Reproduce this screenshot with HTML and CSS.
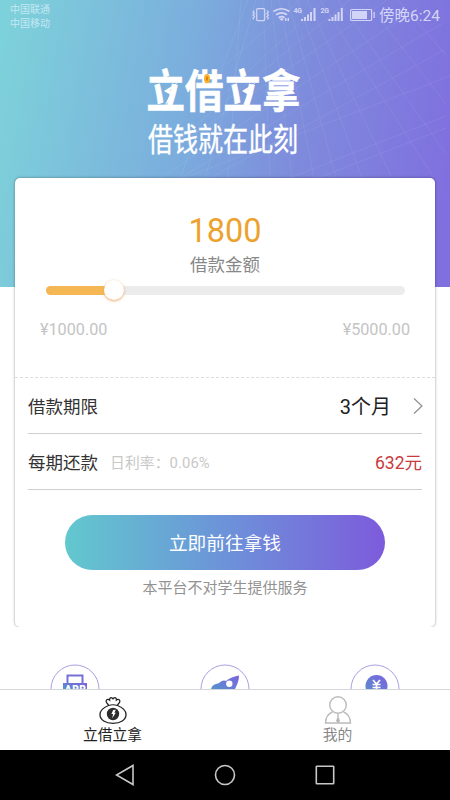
FILE: index.html
```html
<!DOCTYPE html>
<html lang="zh-CN">
<head>
<meta charset="utf-8">
<title>立借立拿</title>
<link rel="stylesheet" href="styles.css">
</head>
<body>
<div class="phone">
  <svg class="mesh" width="450" height="287" viewBox="0 0 450 287" aria-hidden="true">
    <g fill="none" stroke="#fff" stroke-opacity=".07">
      <path d="M248 0 180 178M256 0 205 178M241 0 228 178M263 0 270 178M271 0 292 178M279 0 314 178M288 0 336 178M297 0 362 178M307 0 392 178M320 0 434 178M338 0 446 154M365 0 446 104M398 0 446 55"/>
      <path d="M450 76 184 178M446 116 290 178M446 128 318 178M443 23 180 178M418 8 160 178M387 0 172 150M350 0 190 130M325 0 214 103M444 50 210 178M300 0 225 65"/>
    </g>
  </svg>
  <header class="status">
    <div class="carriers"><span>中国联通</span><span>中国移动</span></div>
    <div class="indicators">
      <svg width="124" height="18" viewBox="0 0 124 18" aria-hidden="true">
        <g fill="none" stroke="#d3d5f6" stroke-width="1.2">
          <rect x="5.700" y="2.600" width="8" height="12" rx="1"/>
          <path d="M3.200 4.500 2 6l1.500 1.500L2 9l1.500 1.500L2 12l1 1.500M16.200 4.500 17.400 6l-1.500 1.500L17.400 9l-1.500 1.500 1.500 1.500-1 1.500"/>
          <path d="M22.500 5.500q8-5.500 16 0M25 8.800q5.500-4 11 0M27.600 11.700q3-2 6 0" stroke-width="1.700"/>
          <rect x="99.600" y="3.500" width="21" height="11" rx="1"/>
        </g>
        <g fill="#d3d5f6">
          <path d="m28.500 13 2.200-1 2.200 1-2.200 2zM34 12h1.500v3H34zM36.500 12h1.500v3h-1.500zM50 13h2v2h-2zM53 11h2v4h-2zM56 8.500h2V15h-2zM59 6h2v9h-2zM62.500 2h2v13h-2zM77.500 13h2v2h-2zM80.500 11h2v4h-2zM83.500 8.500h2V15h-2zM86.500 6h2v9h-2zM89.800 2h2v13h-2zM101 5h15v8h-15zM122.500 6h1.300v6h-1.300z"/>
          <text x="42.500" y="7.400">4G</text><text x="69.500" y="7.400">2G</text>
        </g>
      </svg>
      <span class="clock">傍晚6:24</span>
    </div>
  </header>

  <section class="hero">
    <h1 class="brand"><span class="mark">立<svg class="bolt" width="39" height="44" viewBox="0 0 39 44" aria-hidden="true"><path d="M32 17 18 24.500l6 3L18.500 37.400 29 27l-5-3z"/></svg></span><span class="mark">借<i class="coin"></i></span><span class="mark">立<svg class="bolt" width="39" height="44" viewBox="0 0 39 44" aria-hidden="true"><path d="M32 17 18 24.500l6 3L18.500 37.400 29 27l-5-3z"/></svg></span><span class="mark">拿</span></h1>
    <p class="slogan">借钱就在此刻</p>
  </section>

  <main class="card">
    <section class="amount">
      <div class="amount-value">1800</div>
      <div class="amount-label">借款金额</div>
      <div class="slider"><div class="slider-fill"></div><div class="knob"></div></div>
      <div class="range"><span>¥1000.00</span><span>¥5000.00</span></div>
    </section>
    <section class="rows">
      <div class="row">
        <span>借款期限</span>
        <span class="term">3个月</span>
        <svg class="chevron" width="10" height="18" viewBox="0 0 10 18" aria-hidden="true"><path d="m1 1.500 8 7.500-8 7.500" fill="none" stroke="#8e8e8e" stroke-width="1.200"/></svg>
      </div>
      <div class="row">
        <span>每期还款</span>
        <span class="rate">日利率：0.06%</span>
        <span class="payment">632元</span>
      </div>
    </section>
    <button class="submit">立即前往拿钱</button>
    <p class="notice">本平台不对学生提供服务</p>
  </main>

  <section class="features">
    <svg width="50" height="25" viewBox="0 0 50 25" aria-hidden="true">
      <defs><linearGradient id="tone" x1="0" y1="1" x2="1" y2="0"><stop offset="0" stop-color="#5493cb"/><stop offset="1" stop-color="#7d62df"/></linearGradient></defs>
      <circle class="ring" cx="25" cy="25" r="24"/>
      <path d="M17.500 20v-8.500h15V20" fill="none" stroke="#7470d8" stroke-width="2"/>
      <path d="M13 19h24v6H13z" fill="url(#tone)"/>
      <text class="app" x="25.500" y="28.500" text-anchor="middle">APP</text>
    </svg>
    <svg width="50" height="25" viewBox="0 0 50 25" aria-hidden="true">
      <circle class="ring" cx="25" cy="25" r="24"/>
      <path d="M11 25q1-4 5-5 3-.5 5-2.500 3-1.500 5-.500 4-4 13-5.500 0 6-4 13.500z" fill="url(#tone)"/>
      <circle cx="29.300" cy="19.800" r="3.200" fill="#fff"/>
    </svg>
    <svg width="50" height="25" viewBox="0 0 50 25" aria-hidden="true">
      <circle class="ring" cx="25" cy="25" r="24"/>
      <circle cx="26.500" cy="22" r="11" fill="url(#tone)"/>
      <path d="m23 16 3.500 4 3.500-4M22.500 20.500h8M22.500 23.500h8M26.500 20v5" fill="none" stroke="#fff" stroke-width="1.700"/>
    </svg>
  </section>

  <nav class="tabs">
    <a class="tab active">
      <svg width="28" height="28" viewBox="0 0 28 28" aria-hidden="true">
        <path d="M9.500 9.500C9 7 6.500 7 7.200 4.800 7.800 3.200 9.800 3 10.600 4c0-2 1-2.800 2.200-2.200L14 2.800l1.200-1c1.200-.6 2.200.2 2.200 2.200.8-1 2.800-.8 3.400.8.700 2.200-1.800 2.200-2.300 4.700 5 2 8.500 5 8.500 9 0 5.500-5.500 8.800-13 8.800S1 24 1 18.500c0-4 3.500-7 8.500-9Z" fill="none" stroke="#222" stroke-width="1.300"/>
        <path d="M9.500 9.500q4.500-1.500 9 0" fill="none" stroke="#222" stroke-width="1.100"/>
        <circle cx="14" cy="18" r="6.200" fill="#2c2c2c"/>
        <path d="m14.200 14 2.600-.2-1.400 2.900h1.400l-3.600 5.500.9-4.200h-1.700z" fill="#fff"/>
      </svg>
      <span>立借立拿</span>
    </a>
    <a class="tab">
      <svg width="28" height="28" viewBox="0 0 28 28" aria-hidden="true">
        <g fill="none" stroke="#bbb" stroke-width="1.400"><circle cx="14" cy="9" r="8.300"/><path d="M8.500 16Q1.800 18.500 1.500 27h25q-.3-8.500-7-11M14 18v3"/></g>
        <path d="m14 20 2 5-2 2-2-2z" fill="#b5b5b5"/>
      </svg>
      <span>我的</span>
    </a>
  </nav>

  <footer class="system">
    <svg width="20" height="22" viewBox="0 0 20 22" aria-hidden="true"><path d="M18 1.500v19L1.500 11Z"/></svg>
    <svg width="22" height="22" viewBox="0 0 22 22" aria-hidden="true"><circle cx="11" cy="11" r="9.500"/></svg>
    <svg width="20" height="22" viewBox="0 0 20 22" aria-hidden="true"><rect x="1.300" y="2.300" width="17.400" height="17.400" rx=".5"/></svg>
  </footer>
</div>
</body>
</html>
```
FILE: styles.css
```css
* { box-sizing: border-box; }
body {
  margin: 0;
  font-family: Roboto, "Noto Sans CJK SC", sans-serif;
  font-weight: 400;
  color: #333;
}
h1, p { margin: 0; }
svg { display: block; flex: none; }

.phone {
  position: relative;
  display: flex;
  flex-direction: column;
  width: 450px;
  height: 800px;
  overflow: hidden;
  background: linear-gradient(99deg, #7dd1da 2%, #7baedd 40%, #7e8cdc 64%, #806fdf 97%) 0 0 / 100% 287px no-repeat #fff;
}
.mesh { position: absolute; top: 0; left: 0; }

.status {
  position: relative;
  display: flex;
  justify-content: space-between;
  height: 32px;
  padding: 2px 10px 0;
  color: #d3d5f6;
}
.carriers {
  display: flex;
  flex-direction: column;
  padding-top: 1px;
  font-size: 10px;
  line-height: 14px;
  color: #c3e8f2;
}
.indicators { display: flex; gap: 4px; padding-top: 4px; }
.indicators text { font-size: 7px; font-weight: 700; letter-spacing: -.3px; }
.clock { padding-top: 1px; font-size: 15.500px; line-height: 19px; white-space: nowrap; }

.hero {
  position: relative;
  display: flex;
  flex-direction: column;
  align-items: center;
  flex: none;
  height: 146px;
  padding-top: 34px;
  color: #fff;
  font-family: "Noto Sans CJK SC", sans-serif;
}
.brand {
  display: flex;
  margin-right: 3px;
  font-size: 38.500px;
  font-weight: 700;
  line-height: 44px;
  transform: scaleY(1.17);
  -webkit-text-stroke: .5px #fff;
}
.mark { position: relative; }
.bolt { position: absolute; top: 0; left: 0; fill: #fff; }
.coin {
  position: absolute;
  top: 10px;
  left: 19px;
  width: 6px;
  height: 8px;
  border: 2px solid #f7b32b;
  border-radius: 50%;
  background: #e07d12;
}
.slogan {
  margin: 10px 4px 0 0;
  font-size: 25px;
  font-weight: 400;
  line-height: 34px;
  -webkit-text-stroke: .3px #fff;
  transform: scaleY(1.25);
}

.card {
  position: relative;
  flex: none;
  height: 449px;
  margin: 0 15px;
  border-radius: 5px;
  background: #fff;
  box-shadow: 0 0 3px rgba(0, 0, 0, .4);
  clip-path: inset(-3px -3px 0 -3px);
}
.amount {
  height: 200px;
  padding-top: 33px;
  border-bottom: 1px dashed #ddd;
  text-align: center;
}
.amount-value { font-size: 32.500px; line-height: 40px; color: #eca22f; }
.amount-label { padding-top: 1px; font-size: 17.500px; line-height: 26px; color: #888; }
.slider {
  position: relative;
  height: 9px;
  margin: 8px 30px 0 31px;
  border-radius: 5px;
  background: #ececec;
}
.slider-fill { width: 68px; height: 9px; border-radius: 5px 0 0 5px; background: #f5b754; }
.knob {
  position: absolute;
  top: -6px;
  left: 58px;
  width: 20px;
  height: 20px;
  border-radius: 50%;
  background: #fff;
  box-shadow: 0 1px 3px #e9a566;
}
.range {
  display: flex;
  justify-content: space-between;
  margin: 24px 25px 0;
  font-size: 16.200px;
  line-height: 22px;
  color: #c4c4c4;
}
.rows { padding: 0 13px; }
.row {
  display: flex;
  align-items: center;
  height: 56px;
  padding-top: 2px;
  border-bottom: 1px solid #cfcfcf;
  font-size: 17.500px;
  line-height: 26px;
}
.term { margin-left: auto; font-size: 20px; color: #222; }
.chevron { margin: -2px -1px 0 22px; }
.rate { margin-left: 12px; padding-top: 1px; font-size: 14.800px; letter-spacing: .1px; color: #c8c8c8; }
.payment { margin-left: auto; color: #c93a3d; }
.submit {
  display: block;
  width: 320px;
  height: 55px;
  margin: 25px auto 0;
  padding: 3px 0 0;
  border: 0;
  border-radius: 28px;
  background: linear-gradient(90deg, #62c8ce, #6c93d9 50%, #7d5bdc);
  color: #fff;
  font: inherit;
  font-size: 18.700px;
  line-height: 52px;
}
.notice { margin-top: 6px; font-size: 15px; line-height: 24px; text-align: center; color: #929292; }

.features {
  display: flex;
  justify-content: space-between;
  flex: none;
  height: 62px;
  padding: 37px 50px 0;
}
.ring { fill: #fff; stroke: #a9a0e2; stroke-width: 1; }
.app { fill: #fff; font-size: 10px; font-weight: 900; letter-spacing: .5px; }

.tabs {
  display: flex;
  flex: none;
  height: 61px;
  border-top: 1px solid #d3d7da;
  background: #fff;
}
.tab {
  display: flex;
  flex-direction: column;
  align-items: center;
  flex: 1;
  padding-top: 6px;
  font-size: 14.800px;
  line-height: 22px;
  color: #888;
}
.active { color: #222; }

.system {
  display: flex;
  justify-content: center;
  align-items: center;
  gap: 79px;
  flex: none;
  height: 50px;
  background: #000;
  fill: none;
  stroke: #c8c8c8;
  stroke-width: 1.600;
}
```
